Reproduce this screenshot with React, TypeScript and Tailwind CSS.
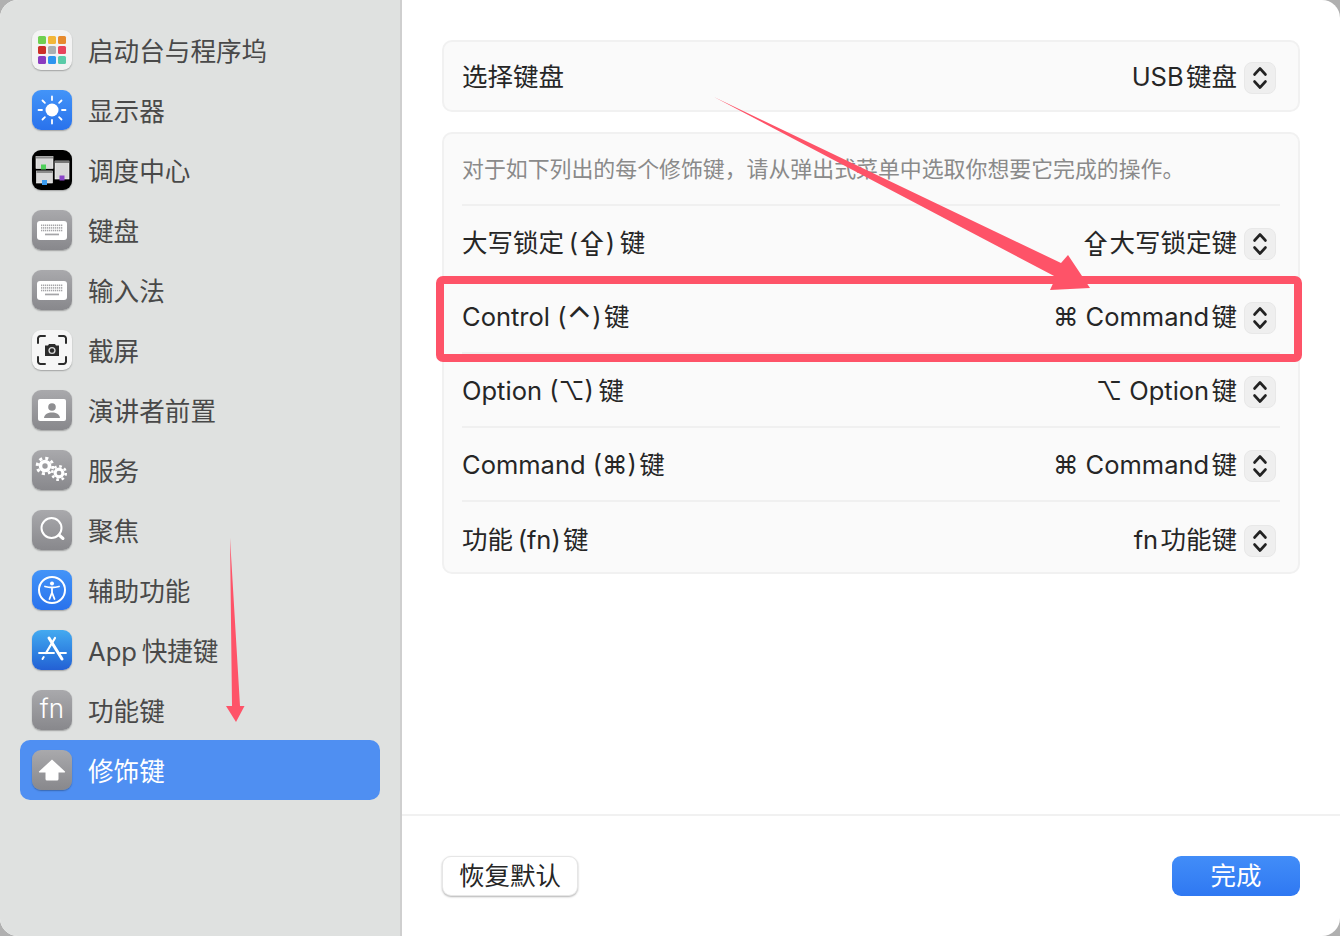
import React from 'react';

const grayTile = 'bg-linear-to-b from-[#a9a9ac] to-[#88888c]';
const blueTile = 'bg-linear-to-b from-[#4394f8] to-[#2a72ec]';

function Tile({ className, children }: { className: string; children?: React.ReactNode }) {
  return (
    <div className={`w-10 h-10 rounded-[9px] shrink-0 flex items-center justify-center overflow-hidden shadow-[0_1px_1.5px_rgba(0,0,0,0.28)] ${className}`}>
      {children}
    </div>
  );
}

function KeyboardGlyph() {
  const keys: React.ReactNode[] = [];
  for (let r = 0; r < 3; r++) {
    for (let c = 0; c < 11; c++) {
      keys.push(<rect key={`${r}-${c}`} x={4 + c * 2} y={3.5 + r * 2.6} width="1.3" height="1.6" fill="#a5a5a8" />);
    }
  }
  return (
    <svg width="30" height="19" viewBox="0 0 30 19">
      <rect width="30" height="19" rx="3" fill="#fff" />
      {keys}
      <rect x="8" y="12.6" width="14" height="1.7" fill="#a5a5a8" />
    </svg>
  );
}

function LaunchpadIcon() {
  const colors = ['#6fd051', '#f2b638', '#e68a2e', '#cc2f28', '#aab0b2', '#e8425c', '#8a3bc0', '#2e95ef', '#5acba8'];
  return (
    <Tile className="bg-[#f3f3f3]">
      <div className="grid grid-cols-3 gap-[2px]">
        {colors.map((c) => (
          <span key={c} className="w-2 h-2 rounded-[1.5px]" style={{ backgroundColor: c }} />
        ))}
      </div>
    </Tile>
  );
}

function SunIcon() {
  return (
    <Tile className={blueTile}>
      <svg width="30" height="30" viewBox="0 0 30 30">
        <circle cx="15" cy="15" r="6.5" fill="#fff" />
        <g stroke="#fff" strokeWidth="1.8" strokeLinecap="round">
          <path d="M15 1.5v3.5M15 25v3.5M1.5 15h3.5M25 15h3.5M5.5 5.5l2.4 2.4M22.1 22.1l2.4 2.4M5.5 24.5l2.4-2.4M22.1 7.900l2.4-2.4" />
        </g>
      </svg>
    </Tile>
  );
}

function MissionIcon() {
  return (
    <Tile className="bg-black">
      <svg width="40" height="40" viewBox="0 0 40 40">
        <rect x="4" y="6.500" width="17" height="12" fill="#d8d8d8" stroke="#fff" strokeWidth="0.6" />
        <rect x="4" y="6.500" width="17" height="2" fill="#8b8b8b" />
        <rect x="4.500" y="21" width="16" height="12" fill="#d8d8d8" stroke="#fff" strokeWidth="0.6" />
        <rect x="4.500" y="21" width="16" height="2" fill="#8b8b8b" />
        <rect x="23" y="11" width="14" height="18" fill="#d8d8d8" stroke="#fff" strokeWidth="0.6" />
        <rect x="23" y="11" width="14" height="2" fill="#777" />
        <rect x="9" y="14.500" width="5" height="5" fill="#4fd05a" />
        <rect x="10" y="30" width="5" height="5" fill="#3a9bf0" />
        <rect x="27.500" y="25.500" width="5" height="5" fill="#8a45c8" />
      </svg>
    </Tile>
  );
}

function ScreenshotIcon() {
  return (
    <Tile className="bg-[#f6f6f6]">
      <svg width="34" height="34" viewBox="0 0 34 34">
        <g fill="none" stroke="#2b2b2b" strokeWidth="2" strokeLinecap="round">
          <path d="M3 10V5.500A2.500 2.500 0 0 1 5.500 3H10M24 3h4.500A2.500 2.500 0 0 1 31 5.500V10M3 24v4.500A2.500 2.500 0 0 0 5.500 31H10M24 31h4.500a2.500 2.500 0 0 0 2.500-2.500V24" />
        </g>
        <path d="M10 12.500h3l1-1.500h6l1 1.500h3v10.500H10z" fill="#2b2b2b" />
        <circle cx="17" cy="17.500" r="3.600" fill="#d8d8d8" />
        <circle cx="17" cy="17.500" r="2.200" fill="#2b2b2b" />
      </svg>
    </Tile>
  );
}

function PresenterIcon() {
  return (
    <Tile className={grayTile}>
      <svg width="28" height="22" viewBox="0 0 28 22">
        <rect width="28" height="22" rx="2" fill="#fff" />
        <circle cx="14" cy="8" r="3.800" fill="#8f8f92" />
        <path d="M6 19c.5-4 4-5.500 8-5.500s7.500 1.500 8 5.500z" fill="#8f8f92" />
      </svg>
    </Tile>
  );
}

function Gear({ cx, cy, r }: { cx: number; cy: number; r: number }) {
  const teethRadius = r * 1.3;
  const tooth = (2 * Math.PI * teethRadius) / 16;
  return (
    <g fill="none" stroke="#fff">
      <circle cx={cx} cy={cy} r={r * 0.75} strokeWidth={r * 0.6} />
      <circle cx={cx} cy={cy} r={teethRadius} strokeWidth={r * 0.5} strokeDasharray={`${tooth} ${tooth}`} />
    </g>
  );
}

function ServicesIcon() {
  return (
    <Tile className={grayTile}>
      <svg width="40" height="40" viewBox="0 0 40 40">
        <Gear cx={13} cy={16} r={6} />
        <Gear cx={27} cy={23} r={5.200} />
      </svg>
    </Tile>
  );
}

function SpotlightIcon() {
  return (
    <Tile className={grayTile}>
      <svg width="40" height="40" viewBox="0 0 40 40">
        <circle cx="19.500" cy="18" r="10" fill="none" stroke="#fff" strokeWidth="2" />
        <path d="M27 25l4 3.500" stroke="#fff" strokeWidth="3" strokeLinecap="round" />
      </svg>
    </Tile>
  );
}

function AccessibilityIcon() {
  return (
    <Tile className={blueTile}>
      <svg width="30" height="30" viewBox="0 0 30 30">
        <circle cx="15" cy="15" r="13" fill="none" stroke="#fff" strokeWidth="2" />
        <circle cx="15" cy="8.500" r="2" fill="#fff" />
        <path d="M8 11.500c4.500 1.300 9.500 1.300 14 0M15 12.500v5M15 17.500l-2.500 6.500M15 17.500l2.500 6.500" fill="none" stroke="#fff" strokeWidth="1.800" strokeLinecap="round" />
      </svg>
    </Tile>
  );
}

function AppStoreIcon() {
  return (
    <Tile className="bg-linear-to-b from-[#44aaf0] to-[#2460d4]">
      <svg width="40" height="40" viewBox="0 0 40 40">
        <path d="M17 8l13 21" stroke="#fff" strokeWidth="3" strokeLinecap="round" fill="none" />
        <path d="M23 8L14 23" stroke="#fff" strokeWidth="2.200" strokeLinecap="round" fill="none" />
        <path d="M7 23h15M28 23h6" stroke="#fff" strokeWidth="1.800" strokeLinecap="round" />
        <path d="M10.500 29l1.200-2" stroke="#fff" strokeWidth="2" strokeLinecap="round" />
      </svg>
    </Tile>
  );
}

function FnIcon() {
  return (
    <Tile className={grayTile}>
      <span className="text-white text-[26px] leading-none font-light font-['Inter'] -mt-[3px]">fn</span>
    </Tile>
  );
}

function ModifierIcon() {
  return (
    <Tile className={grayTile}>
      <svg width="28" height="24" viewBox="0 0 28 24">
        <path d="M14 1.500L27 13.500a.6.600 0 0 1-.4 1H20.500V21a1.500 1.500 0 0 1-1.500 1.500H9A1.500 1.500 0 0 1 7.500 21V14.500H1.400a.6.600 0 0 1-.4-1z" fill="#fff" />
      </svg>
    </Tile>
  );
}

function KeyboardIcon() {
  return (
    <Tile className={grayTile}>
      <KeyboardGlyph />
    </Tile>
  );
}

const sidebarItems: { label: string; icon: React.ReactNode }[] = [
  { label: '启动台与程序坞', icon: <LaunchpadIcon /> },
  { label: '显示器', icon: <SunIcon /> },
  { label: '调度中心', icon: <MissionIcon /> },
  { label: '键盘', icon: <KeyboardIcon /> },
  { label: '输入法', icon: <KeyboardIcon /> },
  { label: '截屏', icon: <ScreenshotIcon /> },
  { label: '演讲者前置', icon: <PresenterIcon /> },
  { label: '服务', icon: <ServicesIcon /> },
  { label: '聚焦', icon: <SpotlightIcon /> },
  { label: '辅助功能', icon: <AccessibilityIcon /> },
  { label: 'App\u2009快捷键', icon: <AppStoreIcon /> },
  { label: '功能键', icon: <FnIcon /> },
];

// the key glyphs sit wider than the text around them
const capsGlyph = <span className="text-[27px] leading-none">⇪</span>;
const controlGlyph = <span className="text-[33px] leading-none relative top-[4px]">⌃</span>;

function Stepper() {
  return (
    <div className="w-8 h-8 mt-1 rounded-lg bg-[#efefef] border border-[#e8e8e8] flex items-center justify-center shrink-0">
      <svg width="16" height="24" viewBox="0 0 16 24" fill="none" stroke="#222" strokeWidth="2.600" strokeLinecap="round" strokeLinejoin="round">
        <path d="M2.500 8.500L8 2.500l5.500 6M2.500 15.500L8 21.500l5.500-6" />
      </svg>
    </div>
  );
}

function Row({ left, right, divider = true }: { left: React.ReactNode; right: React.ReactNode; divider?: boolean }) {
  return (
    <div className={`h-[74px] flex items-center justify-between ${divider ? 'border-b-2 border-[#f0f0f0]' : ''}`}>
      <span className="pt-[2px]">{left}</span>
      <div className="flex items-center gap-[7px] pr-1">
        <span className="pt-[2px]">{right}</span>
        <Stepper />
      </div>
    </div>
  );
}

export default function App() {
  return (
    <div className="relative w-[1340px] h-[936px] overflow-hidden bg-[#b0b0b0] font-['Inter','Noto_Sans_CJK_SC','DejaVu_Sans',sans-serif]">
      <div className="w-full h-full rounded-[18px] overflow-hidden flex bg-white">
        {/* Sidebar */}
        <aside className="w-[402px] h-full shrink-0 bg-[#dfe1e0] border-r-2 border-[#cfcfcf] pt-5 px-5">
          {sidebarItems.map((item) => (
            <div key={item.label} className="h-[60px] flex items-center gap-4 px-3 text-[25.6px] text-[#494949]">
              {item.icon}
              <span className="pt-1">{item.label}</span>
            </div>
          ))}
          <div className="h-[60px] w-[360px] rounded-[10px] bg-[#4f8ff2] flex items-center gap-4 px-3 text-[25.6px] text-white">
            <ModifierIcon />
            <span className="pt-1">修饰键</span>
          </div>
        </aside>

        {/* Main */}
        <main className="flex-1 flex flex-col text-[25.5px] text-[#262626]">
          <div className="flex-1 pt-10 pl-10 pr-10">
            <div className="h-[72px] pl-[18px] pr-[18px] rounded-[10px] bg-[#fafafa] border-2 border-[#f1f1f1] flex items-center justify-between">
              <span className="pt-[2px]">选择键盘</span>
              <div className="flex items-center gap-[7px] pr-1">
                <span className="pt-[2px]">USB{'\u200A'}键盘</span>
                <Stepper />
              </div>
            </div>

            <div className="mt-5 h-[442px] px-[18px] rounded-[10px] bg-[#fafafa] border-2 border-[#f1f1f1]">
              <div className="h-[72px] flex items-center border-b-2 border-[#f0f0f0] text-[21.9px] text-[#8a8a8a]">
                对于如下列出的每个修饰键，请从弹出式菜单中选取你想要它完成的操作。
              </div>
              <Row
                left={<>大写锁定{'\u2009'}({capsGlyph}){'\u2009'}键</>}
                right={<>{capsGlyph}大写锁定键</>}
              />
              <Row left={<>Control ({controlGlyph}){'\u200A'}键</>} right={'⌘ Command\u200A键'} />
              <Row left={'Option (⌥)\u2009键'} right={'⌥ Option\u200A键'} />
              <Row left={'Command (⌘)\u200A键'} right={'⌘ Command\u200A键'} />
              <Row left={'功能\u2009(fn)\u200A键'} right={'fn\u200A功能键'} divider={false} />
            </div>
          </div>

          <footer className="h-[122px] shrink-0 border-t-2 border-[#f1f1f1] pl-10 pr-10 flex items-center justify-between">
            <button className="h-10 w-[136px] rounded-[9px] bg-white border border-[#e6e6e6] shadow-[0_1px_2px_rgba(0,0,0,0.3)] text-[25.5px] text-[#262626] flex items-center justify-center">
              恢复默认
            </button>
            <button className="h-10 w-[128px] rounded-[9px] bg-linear-to-b from-[#428df8] to-[#2f78f2] text-[25.5px] text-white flex items-center justify-center">
              完成
            </button>
          </footer>
        </main>
      </div>

      {/* Red annotation box */}
      <div className="absolute left-[436px] top-[276px] w-[866px] h-[86px] rounded-[7px] border-8 border-[#fe5368]" />

      {/* Annotation arrows */}
      <svg className="absolute left-0 top-0 pointer-events-none" width="1340" height="936" viewBox="0 0 1340 936">
        <path d="M714 97L1061 263L1068 255L1090 288L1050 290L1056 277z" fill="#fe5368" />
        <path d="M230 538L232 706H226L236 722L244.500 706H240z" fill="#fe5368" />
      </svg>
    </div>
  );
}
